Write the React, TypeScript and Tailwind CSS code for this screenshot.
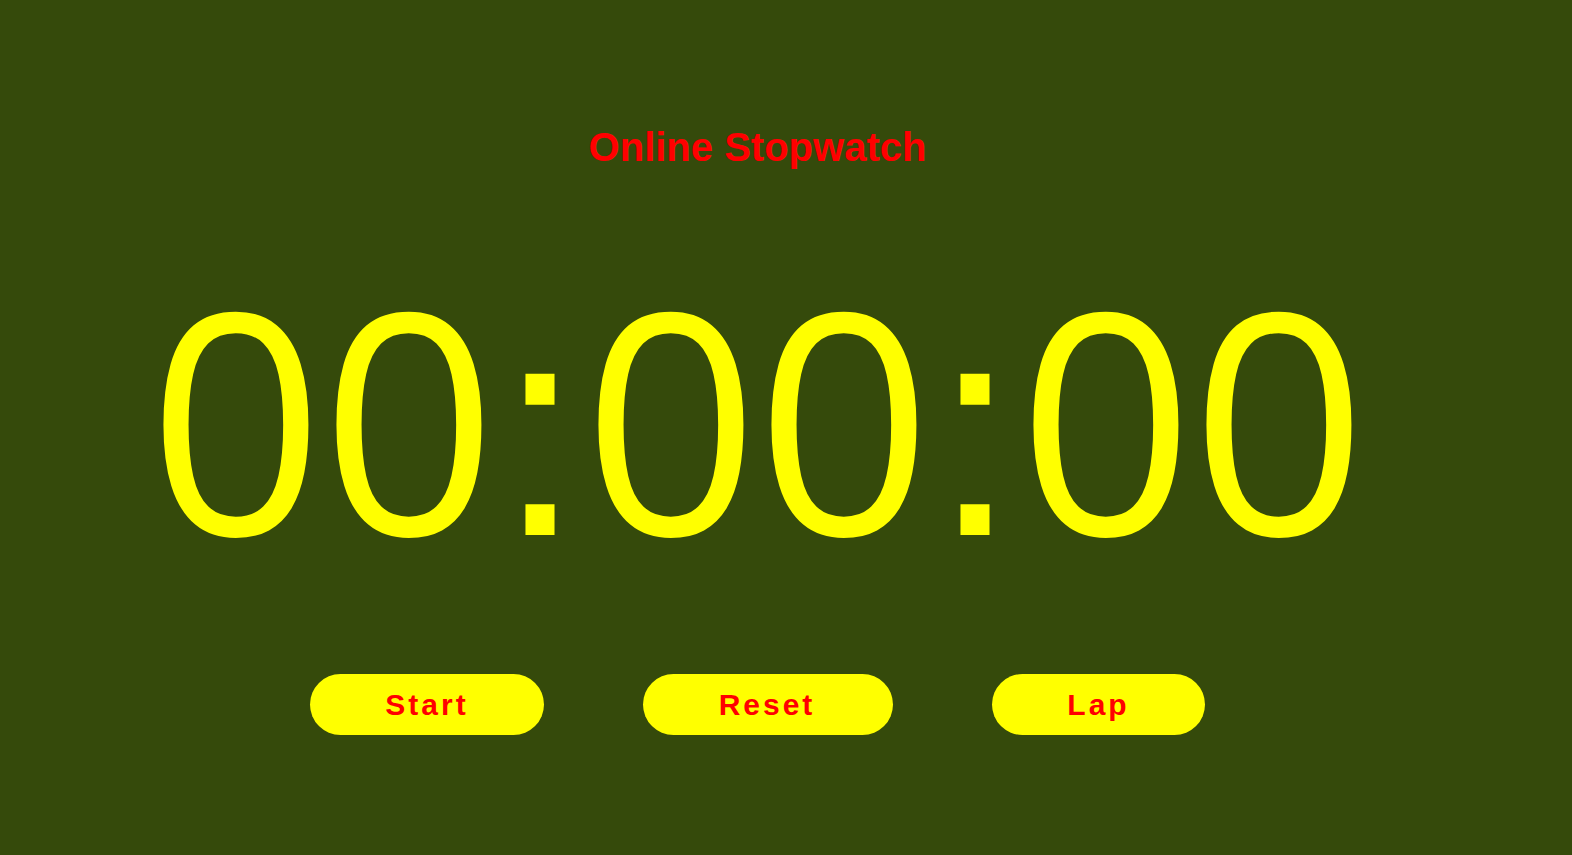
import React from "react";

const Digit = ({ c }: { c: string }) => (
  <span
    className="w-[173px] flex justify-center text-[308px] leading-[320px]"
    style={{ fontFamily: '"Open Sans", sans-serif' }}
  >
    {c}
  </span>
);
const Colon = () => (
  <span
    className="w-[89px] flex justify-center text-[305px] leading-[280px]"
    style={{ fontFamily: '"Liberation Sans", Arial, sans-serif' }}
  >
    :
  </span>
);

export default function App() {
  return (
    <div className="w-[1572px] h-[855px] bg-[#354a0b] overflow-hidden">
      <div className="w-[1515px] flex flex-col items-center">
        <h1
          className="mt-[124px] text-[40px] leading-[46px] font-bold text-[#ff0000]"
          style={{ fontFamily: '"Liberation Sans", Arial, sans-serif' }}
        >
          Online Stopwatch
        </h1>
        <div className="mt-[86px] flex items-baseline text-[#ffff00]">
          <Digit c="0" />
          <Digit c="0" />
          <Colon />
          <Digit c="0" />
          <Digit c="0" />
          <Colon />
          <Digit c="0" />
          <Digit c="0" />
        </div>
        <div
          className="mt-[98px] flex gap-[99px] font-bold text-[30px] text-[#ff0000] tracking-[3px]"
          style={{ fontFamily: '"Liberation Sans", Arial, sans-serif' }}
        >
          <button className="h-[61px] px-[75px] rounded-full bg-[#ffff00] text-[#ff0000]">Start</button>
          <button className="h-[61px] pl-[76px] pr-[78px] rounded-full bg-[#ffff00] text-[#ff0000]">Reset</button>
          <button className="h-[61px] px-[75px] rounded-full bg-[#ffff00] text-[#ff0000]">Lap</button>
        </div>
      </div>
    </div>
  );
}
